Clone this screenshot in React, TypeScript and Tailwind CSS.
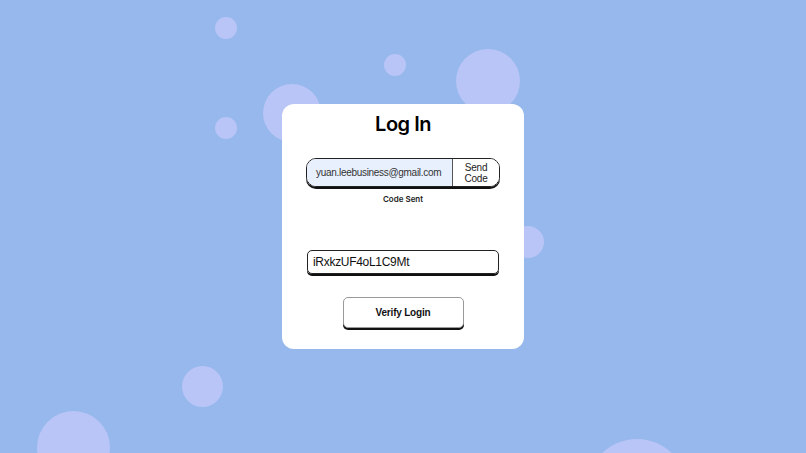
import React from "react"

// decorative bubbles on the page background
const bubbles = [
  { cls: "left-[215px] top-[17px] w-[22px] h-[22px]" },
  { cls: "left-[384px] top-[54px] w-[22px] h-[22px]" },
  { cls: "left-[456px] top-[49px] w-[64px] h-[64px]" },
  { cls: "left-[263px] top-[84px] w-[58px] h-[58px]" },
  { cls: "left-[215px] top-[117px] w-[22px] h-[22px]" },
  { cls: "left-[512px] top-[226px] w-[32px] h-[32px]" },
  { cls: "left-[182px] top-[366px] w-[41px] h-[41px]" },
  { cls: "left-[37px] top-[411px] w-[73px] h-[73px]" },
  { cls: "left-[587px] top-[439px] w-[100px] h-[100px]" },
]

export default function App() {
  return (
    <div className="relative h-screen w-full overflow-hidden bg-[#97b8ec] flex items-center justify-center font-['Liberation_Sans',Arial,sans-serif]">
      {bubbles.map((b, i) => (
        <div key={i} className={"absolute rounded-full bg-[#b8c5f6] " + b.cls} />
      ))}

      <div className="relative w-[242px] h-[245px] bg-white rounded-[12px] flex flex-col items-center pt-[6px]">
        <h1 className="font-['Inter',sans-serif] font-semibold text-[20px] leading-[28px] text-black tracking-[-0.5px]">
          Log In
        </h1>

        <div className="mt-[20px] w-[194px] h-[29px] flex rounded-[10px] border border-[#222] shadow-[0_2px_0_#111] overflow-hidden">
          <div className="flex-1 min-w-0 bg-[#e8f0fe] flex items-center pl-[9px] text-[10px] tracking-[-0.3px] text-[#333] whitespace-nowrap">
            yuan.leebusiness@gmail.com
          </div>
          <button className="w-[47px] shrink-0 border-l border-[#555] bg-white text-[10px] leading-[11px] tracking-[-0.2px] text-[#222] flex flex-col items-center justify-center">
            <span>Send</span>
            <span>Code</span>
          </button>
        </div>

        <p className="mt-[6px] font-['Inter',sans-serif] font-semibold text-[8px] text-[#222]">Code Sent</p>

        <div className="mt-[45px] w-[192px] h-[24px] rounded-[5px] border border-[#222] shadow-[0_2px_0_#111] flex items-center pl-[5px] text-[12px] tracking-[-0.3px] text-[#111]">
          iRxkzUF4oL1C9Mt
        </div>

        <button className="mt-[23px] w-[121px] h-[31px] rounded-[5px] border border-[#999] shadow-[0_2px_0_#111] bg-white text-[10px] tracking-[-0.2px] font-bold text-[#111]">
          Verify Login
        </button>
      </div>
    </div>
  )
}
